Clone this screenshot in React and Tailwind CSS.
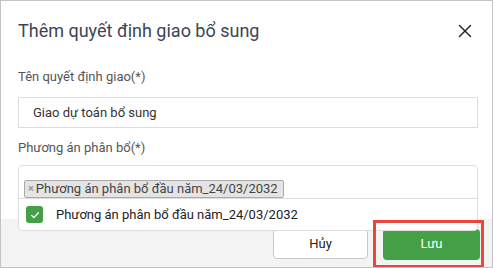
import { X } from "lucide-react";

export default function App() {
  return (
    <div
      className="relative w-[493px] h-[268px] bg-white border border-[#c4c4c4] flex flex-col overflow-hidden"
      style={{ fontFamily: "Roboto, 'Liberation Sans', sans-serif" }}
    >
      <div className="h-[59px] flex items-center justify-between pl-[17px] pr-[16px] shrink-0">
        <h2 className="text-[18px] text-[#3c4557] leading-none">Thêm quyết định giao bổ sung</h2>
        <X className="w-[22px] h-[22px] text-[#1b2333]" strokeWidth={1.6} />
      </div>

      <div className="flex-1 pl-[17px] pr-[14px] pt-[8px]">
        <div className="text-[13px] leading-[18px] text-[#555]">Tên quyết định giao(*)</div>
        <div className="mt-[11px] h-[31px] border border-[#ddd] flex items-center pl-[14px] text-[13px] text-[#333]">
          Giao dự toán bổ sung
        </div>
        <div className="mt-[11px] text-[13px] leading-[18px] text-[#555]">Phương án phân bổ(*)</div>

        <div className="relative mt-[8px] z-10">
          <div className="h-[34px] border border-[#ddd] rounded-t-[4px] bg-white pl-[5px] pt-[9px]">
            <span className="inline-flex items-center h-[18px] pl-[3px] pr-[5px] bg-[#e4e4e4] border border-[#aaa] rounded-[2px] text-[13px] text-[#444] leading-none">
              <span className="text-[#999] text-[11px] mr-[2px] font-bold">×</span>
              Phương án phân bổ đầu năm_24/03/2032
            </span>
          </div>
          <div className="absolute left-0 right-0 top-[33px] h-[33px] bg-white border border-[#ddd] rounded-b-[4px] flex items-center pl-[7px]">
            <span className="w-[17px] h-[17px] rounded-[3px] bg-[#43a047] flex items-center justify-center">
              <svg viewBox="0 0 16 16" className="w-[12px] h-[12px]" fill="none" stroke="white" strokeWidth="1.8" strokeLinecap="round" strokeLinejoin="round">
                <path d="M3.5 8.5l3 3 6-6.5" />
              </svg>
            </span>
            <span className="ml-[13px] text-[13px] text-[#222]">Phương án phân bổ đầu năm_24/03/2032</span>
          </div>
        </div>
      </div>

      <div className="h-[48px] shrink-0 bg-[#f3f3f3] flex items-center justify-end gap-[15px] pr-[12px] pt-[1px]">
        <button className="w-[95px] h-[30px] mt-[1px] bg-white border border-[#c9c9c9] rounded-[4px] text-[13px] text-[#222]">
          Hủy
        </button>
        <button className="w-[97px] h-[31px] mt-[1px] bg-[#43a047] rounded-[4px] text-[13px] text-white">
          Lưu
        </button>
      </div>

      <div className="absolute left-[372px] top-[219px] w-[111px] h-[48px] border-[3px] border-[#e8463e] pointer-events-none z-20" />
    </div>
  );
}
